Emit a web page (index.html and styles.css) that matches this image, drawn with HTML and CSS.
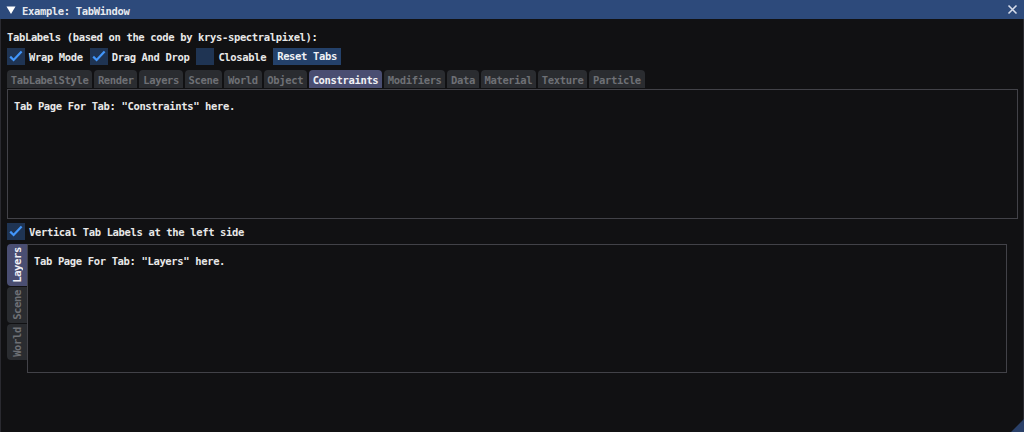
FILE: index.html
```html
<!DOCTYPE html>
<html>
<head>
<meta charset="utf-8">
<link rel="stylesheet" href="styles.css">
</head>
<body>
<div class="window">
  <div class="titlebar">
    <svg class="collapse" width="10" height="9" viewBox="0 0 10 9"><polygon points="0.5,0.5 9.5,0.5 5,8" fill="#ffffff"/></svg>
    <span class="title">Example: TabWindow</span>
    <svg class="close" width="11" height="11" viewBox="0 0 11 11"><path d="M1.5 1.5 L9.5 9.5 M9.5 1.5 L1.5 9.5" stroke="#d6dcea" stroke-width="1.6" fill="none"/></svg>
  </div>
  <div class="content">
    <div class="line">TabLabels (based on the code by krys-spectralpixel):</div>
    <div class="row">
      <div class="cb"><span class="box"><svg width="18" height="17" viewBox="0 0 18 17"><path d="M3.2 8.6 L6.6 12 L14.6 3.6" stroke="#4296fa" stroke-width="2.2" fill="none"/></svg></span><span class="lbl">Wrap Mode</span></div>
      <div class="cb"><span class="box"><svg width="18" height="17" viewBox="0 0 18 17"><path d="M3.2 8.6 L6.6 12 L14.6 3.6" stroke="#4296fa" stroke-width="2.2" fill="none"/></svg></span><span class="lbl">Drag And Drop</span></div>
      <div class="cb"><span class="box"></span><span class="lbl">Closable</span></div>
      <div class="btn">Reset Tabs</div>
    </div>
    <div class="tabs">
      <div class="tab">TabLabelStyle</div>
      <div class="tab">Render</div>
      <div class="tab">Layers</div>
      <div class="tab">Scene</div>
      <div class="tab">World</div>
      <div class="tab">Object</div>
      <div class="tab active">Constraints</div>
      <div class="tab">Modifiers</div>
      <div class="tab">Data</div>
      <div class="tab">Material</div>
      <div class="tab">Texture</div>
      <div class="tab">Particle</div>
    </div>
    <div class="panel panel-top">Tab Page For Tab: "Constraints" here.</div>
    <div class="row row2">
      <div class="cb"><span class="box"><svg width="18" height="17" viewBox="0 0 18 17"><path d="M3.2 8.6 L6.6 12 L14.6 3.6" stroke="#4296fa" stroke-width="2.2" fill="none"/></svg></span><span class="lbl">Vertical Tab Labels at the left side</span></div>
    </div>
    <div class="vwrap">
      <div class="vtabs">
        <div class="vtab active"><span>Layers</span></div>
        <div class="vtab"><span>Scene</span></div>
        <div class="vtab"><span>World</span></div>
      </div>
      <div class="panel panel-side">Tab Page For Tab: "Layers" here.</div>
    </div>
  </div>
  <svg class="grip" width="13" height="13" viewBox="0 0 13 13"><polygon points="13,0 13,13 0,13" fill="#2a4068"/></svg>
</div>
</body>
</html>
```

FILE: styles.css
```css
html, body {
  margin: 0;
  padding: 0;
  background: #111113;
}
body {
  width: 1024px;
  height: 432px;
  overflow: hidden;
  font-family: "DejaVu Sans Mono", "Liberation Mono", monospace;
  font-size: 10.5px;
  font-weight: bold;
  letter-spacing: -0.35px;
  color: #e8e8e8;
}
.window {
  position: relative;
  width: 1024px;
  height: 432px;
  box-sizing: border-box;
  background: #111113;
  border-left: 1px solid #2a2a30;
  border-right: 1px solid #2a2a30;
}
.titlebar {
  height: 19px;
  box-sizing: border-box;
  background: #2d4a7b;
  display: flex;
  align-items: flex-start;
  padding-top: 3px;
  line-height: 16px;
  margin: 0 -1px;
}
.collapse {
  margin: 3px 0 0 6px;
  flex: none;
}
.title {
  margin-left: 6px;
  color: #e6e9ef;
  flex: 1;
}
.close {
  margin: 1px 6px 0 0;
  flex: none;
}
.content {
  padding: 11px 5px 0 6px;
  display: flex;
  flex-direction: column;
}
.line {
  height: 14px;
  line-height: 14px;
  white-space: nowrap;
}
.row {
  margin-top: 4px;
  height: 17px;
  display: flex;
  align-items: center;
  gap: 7px;
}
.row2 {
  margin-top: 4px;
}
.cb {
  display: flex;
  align-items: center;
  height: 17px;
}
.box {
  width: 18px;
  height: 17px;
  background: #1f3453;
  display: block;
  flex: none;
}
.box svg {
  display: block;
}
.lbl {
  margin-left: 4px;
  line-height: 14px;
  white-space: nowrap;
}
.btn {
  height: 17px;
  line-height: 17px;
  padding: 0 4px;
  background: #24416a;
  color: #eef1f6;
  white-space: nowrap;
}
.tabs {
  margin-top: 5px;
  height: 18px;
  display: flex;
  gap: 2px;
}
.tab {
  height: 18px;
  box-sizing: border-box;
  padding: 2px 3.75px 0 3.75px;
  line-height: 16px;
  background: #2a2c30;
  color: #6e7075;
  border-radius: 4px 4px 0 0;
  white-space: nowrap;
}
.tab.active {
  background: #4a4e72;
  color: #f0f0f5;
}
.panel {
  box-sizing: border-box;
  border: 1px solid #424248;
  padding: 9px 6px;
  line-height: 14px;
  white-space: nowrap;
}
.panel-top {
  margin-top: 1px;
  height: 130px;
}
.vwrap {
  margin-top: 4px;
  display: flex;
  align-items: flex-start;
}
.vtabs {
  width: 20px;
  display: flex;
  flex-direction: column;
  gap: 1px;
  flex: none;
}
.vtab {
  width: 20px;
  box-sizing: border-box;
  padding: 3px 0;
  background: #2a2c30;
  color: #6e7075;
  border-radius: 4px 0 0 4px;
  display: flex;
  justify-content: center;
}
.vtab span {
  writing-mode: vertical-rl;
  transform: rotate(180deg);
  line-height: 20px;
  white-space: nowrap;
}
.vtab.active {
  background: #4a4e72;
  color: #f0f0f5;
}
.panel-side {
  width: 980px;
  height: 129px;
  padding-left: 6px;
}
.grip {
  position: absolute;
  right: -1px;
  bottom: 0;
}
```
